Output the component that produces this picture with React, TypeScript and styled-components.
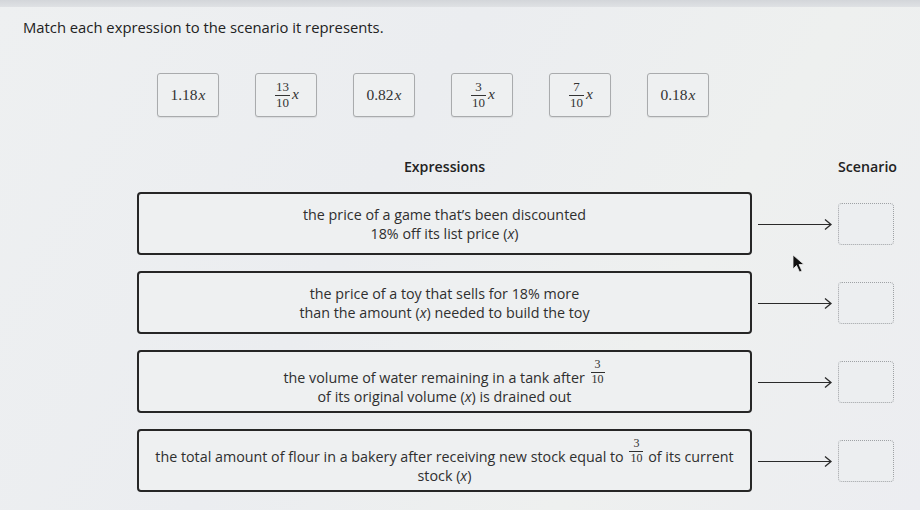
import * as React from 'react';
import styled, { createGlobalStyle } from 'styled-components';

const GlobalStyle = createGlobalStyle`
    html, body {
        margin: 0;
        padding: 0;
        background: #eceef0;
    }
`;

const expressions = [
    { kind: 'dec', value: '1.18' },
    { kind: 'frac', num: '13', den: '10' },
    { kind: 'dec', value: '0.82' },
    { kind: 'frac', num: '3', den: '10' },
    { kind: 'frac', num: '7', den: '10' },
    { kind: 'dec', value: '0.18' },
];

const Page = styled.div`
    position: relative;
    width: 920px;
    height: 510px;
    overflow: hidden;
    background: linear-gradient(120deg, #eef0f1 0%, #ebedf0 40%, #eef0ef 70%, #ecedf1 100%);
    font-family: 'Open Sans', 'Liberation Sans', sans-serif;
    color: #2b2b2b;
`;

const TopStrip = styled.div`
    height: 7px;
    background: linear-gradient(180deg, #d3d6da 0%, #dfe1e4 100%);
`;

const Title = styled.h1`
    margin: 0;
    padding: 10px 0 0 23px;
    font-size: 14.8px;
    font-weight: 400;
    line-height: 20px;
    color: #222;
`;

const TileRow = styled.div`
    display: flex;
    gap: 36px;
    padding: 36px 0 0 157px;
`;

const Tile = styled.div`
    box-sizing: border-box;
    width: 62px;
    height: 44px;
    display: flex;
    align-items: center;
    justify-content: center;
    border: 1px solid #a9abad;
    border-radius: 3px;
    background: #eef0f1;
    box-shadow: 0 1px 1px rgba(0, 0, 0, 0.08);
    font-family: 'Liberation Serif', 'DejaVu Serif', serif;
    font-size: 15.5px;
    color: #333;
`;

const MathVar = styled.i<{ $lift?: number }>`
    font-family: 'Liberation Serif', 'DejaVu Serif', serif;
    font-style: italic;
    margin-left: 1px;
    position: relative;
    top: ${p => -(p.$lift || 0)}px;
`;

const Frac = styled.span<{ $size: number }>`
    display: inline-block;
    text-align: center;
    vertical-align: baseline;
    font-family: 'Liberation Serif', 'DejaVu Serif', serif;
    font-size: ${p => p.$size}px;
    line-height: ${p => p.$size + 1}px;
    margin: 0 1px 0 2px;
`;

const FracNum = styled.span`
    display: block;
    padding: 0 1px 1px;
    border-bottom: 1px solid currentColor;
`;

const FracDen = styled.span`
    display: block;
    padding: 0 1px;
`;

const Board = styled.div`
    display: grid;
    grid-template-columns: 615px 86px 56px;
    row-gap: 16px;
    padding: 41px 0 0 137px;
`;

const ColumnHead = styled.div`
    font-size: 14.2px;
    font-weight: 600;
    line-height: 18px;
    text-align: center;
    color: #222;
    margin-bottom: 0;
`;

const ExpressionBox = styled.div`
    box-sizing: border-box;
    height: 63px;
    display: flex;
    align-items: center;
    justify-content: center;
    border: 2px solid #262626;
    border-radius: 4px;
    background: #eef0f1;
    padding: 0 6px;
    text-align: center;
    font-size: 14.3px;
    line-height: 19px;
    color: #2f2f2f;
`;

const ArrowCell = styled.div`
    display: flex;
    align-items: center;
    padding-left: 6px;
`;

const ScenarioCell = styled.div`
    display: flex;
    align-items: center;
`;

const DropSlot = styled.div`
    box-sizing: border-box;
    width: 56px;
    height: 42px;
    border: 1px dotted #9ea1a4;
    border-radius: 4px;
    background: #eceef0;
`;

const Cursor = styled.svg`
    position: absolute;
    left: 792px;
    top: 254px;
`;

const Fraction: React.FC<{ num: string; den: string; size?: number }> = ({ num, den, size = 12 }) => (
    <Frac $size={size}>
        <FracNum>{num}</FracNum>
        <FracDen>{den}</FracDen>
    </Frac>
);

const X = () => <span style={{ fontStyle: 'italic' }}>x</span>;

const scenarios: React.ReactNode[] = [
    <>the price of a game that’s been discounted<br />18% off its list price (<X />)</>,
    <>the price of a toy that sells for 18% more<br />than the amount (<X />) needed to build the toy</>,
    <>the volume of water remaining in a tank after <Fraction num="3" den="10" /><br />of its original volume (<X />) is drained out</>,
    <>the total amount of flour in a bakery after receiving new stock equal to <Fraction num="3" den="10" /> of its current<br />stock (<X />)</>,
];

const Arrow = () => (
    <svg width="76" height="12" viewBox="0 0 76 12" fill="none">
        <path d="M0 6.5H73" stroke="#2a2a2a" strokeWidth="1.2" />
        <path d="M67 1.5L73 6.5L67 11.5" stroke="#2a2a2a" strokeWidth="1.3" />
    </svg>
);

export default function App() {
    return (
        <Page>
            <GlobalStyle />
            <TopStrip />
            <Title>Match each expression to the scenario it represents.</Title>

            <TileRow>
                {expressions.map((e, i) => (
                    <Tile key={i}>
                        {e.kind === 'dec' ? e.value : <Fraction num={e.num!} den={e.den!} size={13} />}
                        <MathVar $lift={e.kind === 'frac' ? 1 : 0}>x</MathVar>
                    </Tile>
                ))}
            </TileRow>

            <Board>
                <ColumnHead>Expressions</ColumnHead>
                <div />
                <ColumnHead>Scenario</ColumnHead>
                {scenarios.map((s, i) => (
                    <React.Fragment key={i}>
                        <ExpressionBox><div>{s}</div></ExpressionBox>
                        <ArrowCell><Arrow /></ArrowCell>
                        <ScenarioCell><DropSlot /></ScenarioCell>
                    </React.Fragment>
                ))}
            </Board>

            <Cursor width="16" height="20" viewBox="0 0 16 20">
                <path d="M1 1L1 15L4.5 11.5L7.5 18L10 17L7 10.5L12 10.5Z" fill="#111" stroke="#eee" strokeWidth="0.8" />
            </Cursor>
        </Page>
    );
}
